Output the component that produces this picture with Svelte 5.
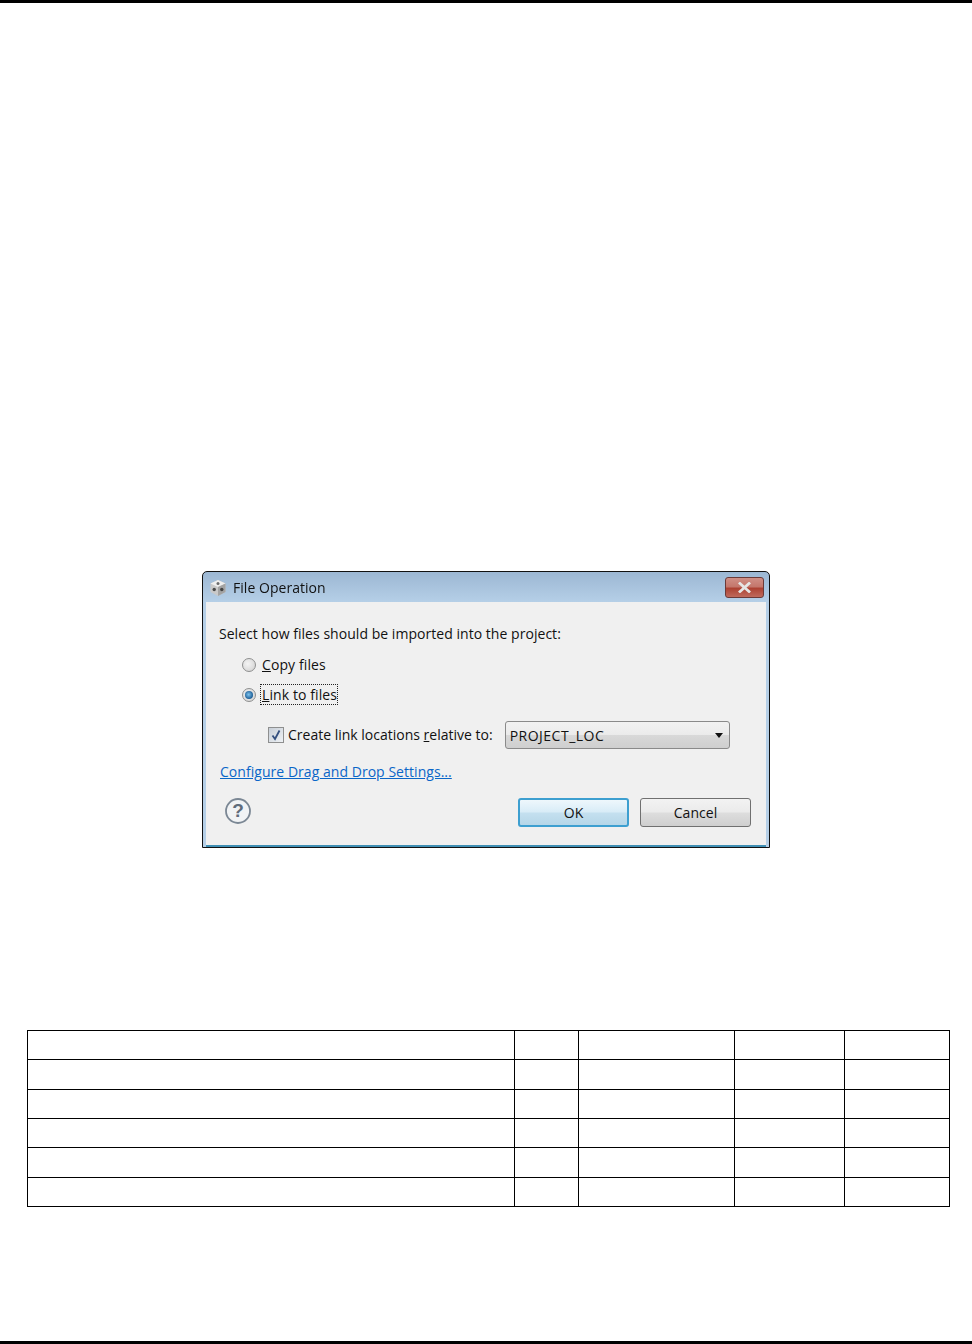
<script lang="ts">
    // empty grid below the dialog, 5 columns x 6 rows
    const colWidths = [487, 64, 156, 110, 105];
    const rowHeights = [29, 30, 29, 29, 30, 29];
</script>

<div class="page">
    <div class="rule"></div>

    <div class="dialog">
        <div class="titlebar">
            <svg class="app-icon" width="18" height="18" viewBox="0 0 18 18">
                <path d="M9 1 L16.5 4.5 L16.5 13 L9 17 L1.5 13 L1.5 4.5 Z" fill="#c9c9c9" />
                <path d="M9 1 L16.5 4.5 L9 8 L1.5 4.5 Z" fill="#efefef" />
                <path d="M9 8 L16.5 4.5 L16.5 13 L9 17 Z" fill="#a3a3a3" />
                <circle cx="9" cy="4.5" r="1.5" fill="#6a6a6a" />
                <circle cx="5.2" cy="10.5" r="1.7" fill="#4a4a4a" />
                <circle cx="12.8" cy="10.5" r="1.7" fill="#444" />
            </svg>
            <span class="title">File Operation</span>
            <div class="close">
                <svg width="15" height="11" viewBox="0 0 15 11">
                    <path d="M3 1.5 L12 9.5 M12 1.5 L3 9.5" stroke="#e6e6e6" stroke-width="2.8" stroke-linecap="square" />
                </svg>
            </div>
        </div>

        <div class="body">
            <p class="prompt">Select how files should be imported into the project:</p>

            <div class="option first">
                <span class="radio"></span>
                <span class="option-label"><u>C</u>opy files</span>
            </div>
            <div class="option second">
                <span class="radio selected"><span class="dot"></span></span>
                <span class="option-label focused"><u>L</u>ink to files</span>
            </div>

            <div class="relative-row">
                <span class="check">
                    <svg width="12" height="12" viewBox="0 0 12 12">
                        <path d="M2.5 6.5 L5 10 L9.5 1.5" fill="none" stroke="#34507f" stroke-width="1.8" />
                    </svg>
                </span>
                <span class="check-label">Create link locations <u>r</u>elative to:</span>
                <div class="combo">
                    <span class="combo-value">PROJECT_LOC</span>
                    <span class="arrow"></span>
                </div>
            </div>

            <div class="link-row">Configure Drag and Drop Settings...</div>

            <div class="footer">
                <svg class="help" width="28" height="28" viewBox="0 0 28 28">
                    <circle cx="14" cy="14" r="12" fill="#f1f3f5" stroke="#7b8794" stroke-width="1.8" />
                    <text x="14" y="20" text-anchor="middle">?</text>
                </svg>
                <div class="buttons">
                    <div class="btn primary">OK</div>
                    <div class="btn">Cancel</div>
                </div>
            </div>
        </div>
    </div>

    <table class="grid">
        <colgroup>
            {#each colWidths as w}
                <col style="width: {w}px" />
            {/each}
        </colgroup>
        <tbody>
            {#each rowHeights as h}
                <tr style="height: {h}px">
                    {#each colWidths as _}
                        <td></td>
                    {/each}
                </tr>
            {/each}
        </tbody>
    </table>

    <div class="spacer"></div>
    <div class="rule"></div>
</div>

<style>
    :global(body) {
        margin: 0;
        background: #fff;
    }
    .page {
        height: 1344px;
        display: flex;
        flex-direction: column;
    }
    .rule {
        height: 3px;
        background: #000;
        flex: none;
    }
    .spacer {
        flex: 1;
    }

    /* the reference is an upscaled screenshot, hence the slight softening */
    .dialog {
        width: 566px;
        height: 275px;
        margin: 568px 0 0 202px;
        border: 1px solid #111;
        border-radius: 5px 5px 0 0;
        box-sizing: content-box;
        background: linear-gradient(#9cb7d3, #b5cfe7 30px);
        display: flex;
        flex-direction: column;
        font-family: "Open Sans", "Noto Sans", sans-serif;
        font-size: 14px;
        letter-spacing: 0.04px;
        color: #111;
        flex: none;
        filter: blur(0.3px);
    }
    .titlebar {
        height: 29px;
        display: flex;
        align-items: center;
        padding: 1px 5px 0 6px;
        flex: none;
    }
    .app-icon {
        margin-right: 6px;
    }
    .close {
        margin-left: auto;
        width: 39px;
        height: 21px;
        box-sizing: border-box;
        border: 1px solid #6b3a38;
        border-radius: 3px;
        background: linear-gradient(#d08f86, #c4776c 45%, #ad4233 55%, #bf6a5c);
        display: flex;
        align-items: center;
        justify-content: center;
    }

    .body {
        flex: 1;
        margin: 0 3px;
        background: #f0f0f0;
        border-bottom: 2px solid #3f8fb4;
        padding: 0 13px;
        display: flex;
        flex-direction: column;
    }
    .prompt {
        margin: 22px 0 0 0;
        line-height: 20px;
    }
    .option {
        display: flex;
        align-items: center;
        gap: 5px;
        height: 20px;
        padding-left: 23px;
        letter-spacing: 0.1px;
    }
    .option-label {
        padding-left: 1px;
    }
    .first {
        margin-top: 10px;
    }
    .second {
        margin-top: 10px;
    }
    .radio {
        width: 12px;
        height: 12px;
        margin-top: 2px;
        border-radius: 50%;
        border: 1px solid #8e8f8f;
        background: radial-gradient(circle at 40% 40%, #f4f4f4, #cfcfcf);
        display: flex;
        align-items: center;
        justify-content: center;
    }
    .dot {
        width: 8px;
        height: 8px;
        border-radius: 50%;
        background: radial-gradient(circle at 45% 45%, #7fc4ee, #1c5d96 70%);
    }
    .focused {
        outline: 1px dotted #222;
    }

    .relative-row {
        display: flex;
        align-items: center;
        margin: 16px 0 0 49px;
        height: 30px;
    }
    .check {
        width: 14px;
        height: 14px;
        border: 1px solid #8e8f8f;
        background: linear-gradient(135deg, #c8cfd8, #eef1f4);
        display: flex;
        align-items: center;
        justify-content: center;
    }
    .check-label {
        margin-left: 4px;
        padding-bottom: 2px;
        letter-spacing: 0;
    }
    .combo {
        margin-left: 12px;
        width: 225px;
        height: 28px;
        box-sizing: border-box;
        border: 1px solid #8a8a8a;
        border-radius: 3px;
        background: linear-gradient(#f2f2f2, #ebebeb 48%, #d8d8d8 52%, #cfcfcf);
        display: flex;
        align-items: center;
        justify-content: space-between;
        padding: 0 6px 0 4px;
    }
    .combo-value {
        letter-spacing: 0.5px;
    }
    .arrow {
        width: 0;
        height: 0;
        border-left: 4px solid transparent;
        border-right: 4px solid transparent;
        border-top: 5px solid #111;
    }

    .link-row {
        margin: 12px 0 0 1px;
        line-height: 20px;
        color: #0a66c8;
        text-decoration: underline;
        align-self: flex-start;
    }

    .footer {
        display: flex;
        justify-content: space-between;
        align-items: center;
        margin-top: 15px;
        padding: 0 2px 0 5px;
    }
    .help {
        margin-bottom: 2px;
    }
    .help text {
        font-family: "Liberation Sans", sans-serif;
        font-size: 19px;
        font-weight: bold;
        fill: #5f6c7b;
    }
    .buttons {
        display: flex;
        gap: 11px;
    }
    .btn {
        width: 111px;
        height: 29px;
        padding-top: 1px;
        box-sizing: border-box;
        border: 1px solid #707070;
        border-radius: 3px;
        background: linear-gradient(#f2f2f2, #ebebeb 48%, #dddddd 52%, #cfcfcf);
        display: flex;
        align-items: center;
        justify-content: center;
    }
    .primary {
        border: 2px solid #3d9fd0;
        background: linear-gradient(#eef7fc, #d8ecf7 48%, #c4e0ef 52%, #b5d6e8);
    }

    .grid {
        margin: 182px 0 0 27px;
        border-collapse: collapse;
        table-layout: fixed;
        width: 922px;
        flex: none;
    }
    .grid td {
        border: 1px solid #000;
        padding: 0;
    }
</style>
